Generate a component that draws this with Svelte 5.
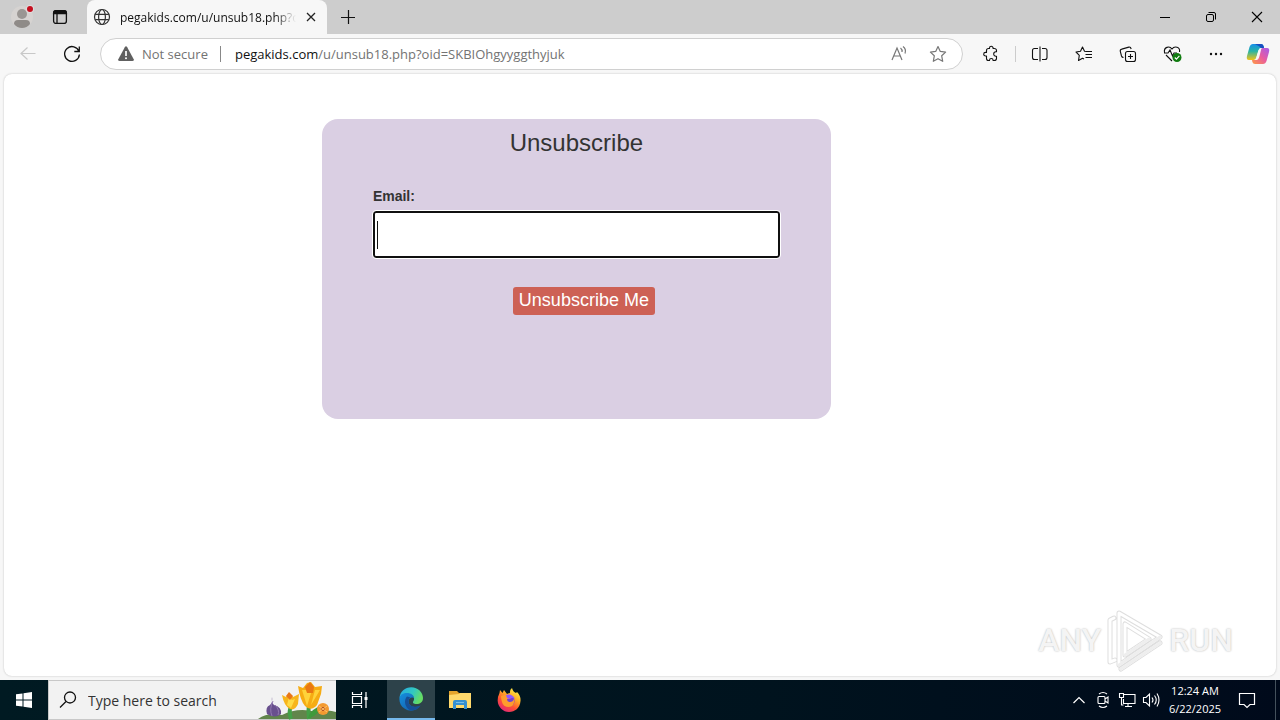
<script>
  let email = $state('');
  let query = $state('');
  const address = { host: 'pegakids.com', path: '/u/unsub18.php?oid=SKBIOhgyyggthyjuk' };
</script>

<div class="desktop">
  <header class="tabs">
    <div class="tab-tools">
      <button class="icon" aria-label="Profile">
        <svg width="24" height="24" viewBox="0 0 24 24"><circle cx="12" cy="12" r="11" fill="#d6d3d1"/><circle cx="12" cy="9" r="5" fill="#9a9693"/><path d="M4 19q0-4 4-4h8q4 0 4 4-3 4-8 4t-8-4z" fill="#8f8b88"/><circle cx="20" cy="4" r="4" fill="#dedcdb"/><circle cx="20" cy="4" r="3" fill="#c50f1f"/></svg>
      </button>
      <button class="icon" aria-label="Tab actions">
        <svg width="16" height="16" viewBox="0 0 16 16" fill="none" stroke="#111" stroke-width="1.3"><rect x="1.6" y="1.6" width="12.8" height="12.8" rx="2.5"/><path d="M1.6 4.5V4q0-2.4 2.4-2.4h8q2.4 0 2.4 2.4v.5z" fill="#111"/><path d="M5 5v9"/></svg>
      </button>
    </div>
    <div class="tab">
      <svg width="18" height="18" viewBox="0 0 18 18" fill="none" stroke="#333" stroke-width="1.2"><circle cx="9" cy="9" r="7.5"/><ellipse cx="9" cy="9" rx="3.4" ry="7.5"/><path d="M2.2 6.3h13.6M2.2 11.7h13.6"/></svg>
      <span class="tab-title">{address.host}{address.path}</span>
      <button class="icon" aria-label="Close tab"><svg width="12" height="12" viewBox="0 0 12 12" stroke="#222" stroke-width="1.3"><path d="M2 2l8 8M10 2l-8 8"/></svg></button>
    </div>
    <button class="icon new-tab" aria-label="New tab"><svg width="16" height="16" viewBox="0 0 16 16" stroke="#111" stroke-width="1.2"><path d="M8.500 1v14M1 8.500h14"/></svg></button>
    <div class="window-tools">
      <button class="icon" aria-label="Minimize"><svg width="12" height="12" viewBox="0 0 12 12" stroke="#000"><path d="M1 6.5h10"/></svg></button>
      <button class="icon" aria-label="Restore"><svg width="12" height="12" viewBox="0 0 12 12" fill="none" stroke="#000"><rect x="1.5" y="3.5" width="7" height="7" rx="1.5"/><path d="M3.5 1.5H9q1.5 0 1.5 1.5v5.500"/></svg></button>
      <button class="icon" aria-label="Close"><svg width="12" height="12" viewBox="0 0 12 12" stroke="#000" stroke-width="1.1"><path d="M1 1l10 10M11 1L1 11"/></svg></button>
    </div>
  </header>

  <nav class="toolbar">
    <div class="nav-tools">
      <button class="icon" aria-label="Back"><svg width="18" height="18" viewBox="0 0 18 18" fill="none" stroke="#c8c8c8" stroke-width="1.2"><path d="M16.500 8.500H2M8.500 2.500l-6.500 6 6.500 6"/></svg></button>
      <button class="icon" aria-label="Refresh"><svg width="20" height="20" viewBox="0 0 20 20" fill="none" stroke="#111" stroke-width="1.3"><path d="M17 7.500A7.400 7.400 0 1 0 17.400 10.500M17.300 2.500V7.500H12.300"/></svg></button>
    </div>
    <div class="address">
      <svg width="18" height="18" viewBox="0 0 18 18"><path d="M7.800 2.200q1.200-1.800 2.400 0l6.500 12q.8 1.800-1.200 1.800h-13q-2 0-1.200-1.800z" fill="#606060"/><path d="M9 6v5" stroke="#fff" stroke-width="1.700"/><circle cx="9" cy="13.200" r="1" fill="#fff"/></svg>
      <span class="insecure">Not secure</span>
      <span class="url"><b>{address.host}</b>{address.path}</span>
      <button class="icon" aria-label="Read aloud"><svg width="18" height="18" viewBox="0 0 18 18" fill="none" stroke="#777" stroke-width="1.2"><path d="M2 15L7 3l5 12M4 11h6.200M10.500 3q2 1.500 1.500 4M13 1.500q3.500 2.500 2 7"/></svg></button>
      <button class="icon" aria-label="Add to favorites"><svg width="18" height="18" viewBox="0 0 18 18" fill="none" stroke="#777" stroke-width="1.2" stroke-linejoin="round"><path d="M9 1.500l2.300 4.900 5.300.7-3.900 3.700 1 5.500L9 13.700l-4.700 2.600 1-5.500L1.400 7.100l5.300-.7z"/></svg></button>
    </div>
    <div class="actions">
      <button class="icon" aria-label="Extensions"><svg width="18" height="18" viewBox="0 0 18 18" fill="none" stroke="#111" stroke-width="1.1" stroke-linejoin="round"><path d="M4.500 5.500q0-2 2-2h1v-.4a1.800 1.800 0 0 1 3.600 0v.4h1q2.400 0 2.400 2v1.300h-.6a2.200 2.200 0 0 0 0 4.400h.6v2.300q0 2-2.400 2h-1v-.2a1.800 1.800 0 0 0-3.600 0v.2h-1q-2 0-2-2v-2.500h-1a1.800 1.800 0 0 1 0-3.600h1z"/></svg></button>
      <i class="rule"></i>
      <button class="icon" aria-label="Split screen"><svg width="18" height="18" viewBox="0 0 18 18" fill="none" stroke="#111" stroke-width="1.1"><path d="M7 3.500H3.500Q1.500 3.500 1.500 5.500v7q0 2 2 2H7M11 3.500h3q2 0 2 2v7q0 2-2 2h-3M9 1.500v15"/></svg></button>
      <button class="icon" aria-label="Favorites"><svg width="18" height="18" viewBox="0 0 18 18" fill="none" stroke="#111" stroke-width="1.1" stroke-linejoin="round"><path d="M11.500 6.500L9.500 6.200 7.500 2 5.500 6.200 1 7l3.300 3.300-.8 5.200 4-2.200 1.500.8M10.500 6.500H17M10.500 9.500H17M10.500 12.500H17"/></svg></button>
      <button class="icon" aria-label="Collections"><svg width="18" height="18" viewBox="0 0 18 18" fill="none" stroke="#111" stroke-width="1.1"><rect x="6.500" y="6.500" width="10" height="10" rx="2"/><path d="M11.500 9v5M9 11.500h5M4.500 12.500q-1.500 0-2-1.500L1.300 6.500q-.4-2 1.500-2.400l7-2Q11.600 1.700 12.200 4"/></svg></button>
      <button class="icon" aria-label="Browser essentials"><svg width="20" height="18" viewBox="0 0 20 18" fill="none" stroke="#111" stroke-width="1.1"><path d="M1.500 7.500C.5 2 6.500.5 9 4c2.500-3.500 8.500-2 7.500 3M3 10l6 6M1 8h4l2-3 2.500 6L11 8h3"/><circle cx="14" cy="12.500" r="4.500" fill="#107c10" stroke="none"/><path d="M11.800 12.500l1.600 1.600 3-3.200" stroke="#fff"/></svg></button>
      <button class="icon" aria-label="Settings and more"><svg width="18" height="18" viewBox="0 0 18 18" fill="#111"><circle cx="4" cy="9" r="1.200"/><circle cx="9" cy="9" r="1.200"/><circle cx="14" cy="9" r="1.200"/></svg></button>
      <button class="icon copilot" aria-label="Copilot">
        <svg width="24" height="22" viewBox="0 0 24 22">
          <defs>
            <linearGradient id="cp1" x1="0" y1="0" x2="0" y2="1"><stop stop-color="#168fe9"/><stop offset=".45" stop-color="#28b4a5"/><stop offset="1" stop-color="#f3c316"/></linearGradient>
            <linearGradient id="cp2" x1="1" y1="0" x2="0" y2="1"><stop stop-color="#a45ceb"/><stop offset=".5" stop-color="#e95c9f"/><stop offset="1" stop-color="#ff9b43"/></linearGradient>
          </defs>
          <path d="M7 1h8q2 0 2.600 2L18 5h-3q-2 0-2.700 2.500l-2 7Q9.700 17 7.500 17H3q-3 0-2-4L3.500 4Q4.500 1 7 1z" fill="url(#cp1)"/>
          <path d="M17 21H9q-2 0-2.600-2L6 17h3q2 0 2.700-2.500l2-7Q14.300 5 16.500 5H21q3 0 2 4l-2.500 9q-1 3-3.500 3z" fill="url(#cp2)"/>
          <path d="M9 1h6q2 0 2.600 2l.4 2h-2q-2 0-2.500-1.500z" fill="#174fc1"/>
          <path d="M10.800 13l2-6q.7-2 2.700-2l-2 8q-1 4-3 4H8q2 0 2.800-4z" fill="#f7f7f7"/>
        </svg>
      </button>
    </div>
  </nav>

  <main class="page">
    <form class="card" onsubmit={(event) => event.preventDefault()}>
      <h1>Unsubscribe</h1>
      <label for="email">Email:</label>
      <input id="email" class="email" type="text" bind:value={email} />
      <button class="submit">Unsubscribe Me</button>
    </form>
    <div class="watermark">
      <span>ANY</span>
      <svg width="60" height="64" viewBox="0 0 60 64" fill="none" stroke-linejoin="round" stroke-linecap="round">
        <g stroke="#dedede" stroke-width="5"><path d="M14 5L55 29 14 57zM20 16v31L44 31zM9 10L5 12v42l5-2M16 61l39-26"/></g>
        <g stroke="#fff" stroke-width="3"><path d="M14 5L55 29 14 57zM20 16v31L44 31zM9 10L5 12v42l5-2M16 61l39-26"/></g>
        <path d="M14 57l41-28M20 47l24-16M16 61l39-26" stroke="#eee" stroke-width="3"/>
      </svg>
      <span>RUN</span>
    </div>
  </main>

  <footer class="taskbar">
    <button class="task" aria-label="Start"><svg width="16" height="16" viewBox="0 0 16 16" fill="#fff"><path d="M0 2.300L6.500 1.400V7.500H0zM7.500 1.200L16 0v7.500H7.500zM0 8.500h6.500v6.100L0 13.700zM7.500 8.500H16V16l-8.500-1.200z"/></svg></button>
    <div class="search">
      <svg width="20" height="20" viewBox="0 0 20 20" fill="none" stroke="#111" stroke-width="1.300"><circle cx="12" cy="7.500" r="5.500"/><path d="M8 11.500L2 17.500"/></svg>
      <input type="text" aria-label="Search" placeholder="Type here to search" bind:value={query} />
      <svg width="78" height="38" viewBox="0 0 78 38">
        <path d="M0 38Q10 31 24 34 40 26 58 31 70 28 78 31V38z" fill="#61854b"/>
        <path d="M33 38Q30 29 34 24M51 38q-1-8 0-16" stroke="#43a047" stroke-width="4" fill="none"/>
        <path d="M50 37q3-10 14-12-3 8-12 12z" fill="#3f9a3c"/>
        <path d="M14 16q-1 5 2 8 8 2 7 9-6 5-14 0-2-7 3-9 3-3 2-8z" fill="#69508e"/><path d="M15 20q-4 8-1 15M17 24q5 5 3 10" stroke="#927ab0" fill="none"/>
        <path d="M24 14l4 2 3-4 4 4 6-3-1 10q-3 7-8 5-6-3-8-14z" fill="#f7b51c"/><path d="M31 16l-2 8 4 3 4-9-3 1z" fill="#ffdb45"/><path d="M28 15l3-4 4 4-3 4z" fill="#e97717"/>
        <path d="M40 5l5 2 4-5 4-1 4 5 7-1-1 8-4 11q-6 7-12 1Q42 19 40 5z" fill="#f6ac13"/><path d="M44 9l5 16 5-16M57 9l-4 15 9-15z" fill="#ffd33a"/><path d="M47 6l5-5 4 5-1 6h-6z" fill="#e97812"/>
        <circle cx="65" cy="28" r="6" fill="#f39a31"/><circle cx="65" cy="28" r="2" fill="#a94a20"/><path d="M61 25l8 6M69 25l-8 6" stroke="#ffbe67"/>
      </svg>
    </div>
    <button class="task view" aria-label="Task view"><svg width="18" height="18" viewBox="0 0 18 18" fill="none" stroke="#fff" stroke-width="1.200"><path d="M1.500 1v2.500h9V1M1.500 17v-2.500h9V17M1.500 5.500h9v7h-9zM15 1v16"/><path d="M13.500 6h3v3h-3z" fill="#fff" stroke="none"/></svg></button>
    <button class="task active" aria-label="Edge">
      <svg width="24" height="24" viewBox="0 0 24 24">
        <defs><linearGradient id="e1" x1="0" y1="0" x2="1" y2=".4"><stop stop-color="#25a9e7"/><stop offset=".6" stop-color="#32c8c0"/><stop offset="1" stop-color="#65dc65"/></linearGradient><linearGradient id="e2" x1="0" y1="0" x2="1" y2="1"><stop stop-color="#1590df"/><stop offset="1" stop-color="#1456a2"/></linearGradient></defs>
        <path d="M.5 11C1 4.500 6 .3 12.300.3 19 .3 24 5.500 24 11c0 4-3 6-6.500 6-3 0-4.300-1.300-3-3 2-3-1-6.500-5-6.500C5 7.500 1.500 9 .5 11z" fill="url(#e1)"/>
        <path d="M.4 12C.4 8 4 5.800 8 6c4 0 7 2.300 7 5-2-1.500-5.500 0-5.500 3.500 0 4 5 7.500 12 4-4 6-11 6.500-16 3C2 19.300.4 16 .4 12z" fill="url(#e2)"/>
        <path d="M8 9.500c-3 3-3 10 3 13.800 4 .8 8-1.500 10.500-4.800-7 3-12 0-12-4 0-2 1-3.500 2-4z" fill="#164f96"/>
      </svg>
    </button>
    <button class="task" aria-label="File Explorer"><svg width="24" height="22" viewBox="0 0 24 22"><path d="M1 2h8l2 2h11v15H1z" fill="#e5a52d"/><path d="M1 6l10-1 1-1h11v15H1z" fill="#ffd96c"/><path d="M5 20v-7q0-2 2-2h10q2 0 2 2v7h-3v-4H8v4z" fill="#358fd0"/><path d="M8 13h8v1H8z" fill="#74bdea"/></svg></button>
    <button class="task" aria-label="Firefox">
      <svg width="24" height="24" viewBox="0 0 24 24">
        <defs><linearGradient id="ff" x1=".8" y1="0" x2=".2" y2="1"><stop stop-color="#fff44f"/><stop offset=".35" stop-color="#ffad24"/><stop offset=".65" stop-color="#ff4f35"/><stop offset="1" stop-color="#df247f"/></linearGradient></defs>
        <path d="M2.500 5L3 2l2.500 3L7 2l3 4q2-1 3-1-.5-3 2-5 1 4 4 5l1-1q4 4 3.500 9C23 20 18 24 12 24S1 19 .7 13Q.5 9 2.500 5z" fill="url(#ff)"/>
        <circle cx="12" cy="13" r="5.500" fill="#7542cf"/><path d="M4 8q4-2 7 0l3 1q-1 2-4 2 0 3 3 3 3 0 4-3 1 7-5 8-6 0-7-5-1-3-1-6z" fill="#ff9d2c"/><path d="M9 7q6-2 9 4-3-2-5 0l-3-1z" fill="#9059ff"/>
      </svg>
    </button>
    <div class="tray">
      <svg width="16" height="18" viewBox="-1 0 16 18" fill="none" stroke="#fff" stroke-width="1.200"><path d="M1.500 12L7 6.500l5.500 5.500"/></svg>
      <svg width="16" height="18" viewBox="-1 0 16 18" fill="none" stroke="#fff" stroke-width="1.100"><rect x="2" y="5.500" width="7" height="7" rx="1"/><path d="M9 8l3-2v6l-3-2M3 3q4-3 8 0M3 15q4 3 8 0"/></svg>
      <svg width="16" height="18" viewBox="1 0 16 18" fill="none" stroke="#fff" stroke-width="1.100"><path d="M6 3.500h11v9H5.500V8M10 12.500v3M7 15.500h7M1.500 2.500h4v4h-4zM3.500 6.500V14h2"/></svg>
      <svg width="16" height="18" viewBox="1 0 16 18" fill="none" stroke="#fff" stroke-width="1.100"><path d="M1.500 6.500H4l3.500-3.500v12L4 11.500H1.500zM10 6.500q2 2.500 0 5M12.500 4.500q3.500 4.500 0 9M15 2.500q4 6.500 0 13"/></svg>
      <time class="clock"><span>12:24 AM</span><span>6/22/2025</span></time>
      <svg class="note" width="18" height="18" viewBox="0 0 18 18" fill="none" stroke="#fff" stroke-width="1.200"><path d="M1.500 2.500h15v11H12l-3 3-3-3H1.500z"/></svg>
      <i class="show-desktop"></i>
    </div>
  </footer>
</div>

<style>
  :global(body) { margin: 0; }
  .desktop { min-height: 100vh; display: flex; flex-direction: column; background: #f7f7f7; font-family: "Open Sans", "Noto Sans", sans-serif; font-size: 13px; color: #111; }
  .desktop * { box-sizing: border-box; }
  svg { display: block; flex: none; overflow: visible; }
  button { font: inherit; border: 0; padding: 0; background: none; color: inherit; }
  .icon { display: grid; place-items: center; flex: none; }
  .tabs { display: flex; align-items: stretch; height: 34px; background: linear-gradient(#cdcdcd 0 0) no-repeat, #f7f7f7; }
  .tab-tools { display: flex; width: 87px; gap: 18px; padding-left: 10px; align-items: center; }
  .tab { display: flex; align-items: center; width: 240px; gap: 9px; padding: 0 10px 0 6px; background: #f7f7f7; border-radius: 8px 8px 0 0; }
  .tab-title { flex: 1; min-width: 0; overflow: hidden; white-space: nowrap; font-size: 12px; mask-image: linear-gradient(to right, #000 88%, transparent); }
  .new-tab { padding: 0 13px; }
  .window-tools { display: flex; gap: 34px; margin-left: auto; padding-right: 17px; }
  .toolbar { display: flex; align-items: center; height: 40px; padding: 0 10px 0 19px; }
  .nav-tools { display: flex; align-items: center; gap: 25px; width: 81px; }
  .address { flex: 1; min-width: 0; display: flex; align-items: center; height: 32px; padding: 0 15px 0 16px; background: #fff; border: 1px solid #d0d0d0; border-radius: 16px; color: #737373; }
  .insecure { margin-left: 7px; padding-right: 12px; border-right: 1px solid #888; line-height: 16px; white-space: nowrap; }
  .url { flex: 1; min-width: 0; overflow: hidden; margin-left: 14px; white-space: nowrap; }
  .url b { font-weight: 400; color: #111; }
  .address .icon + .icon { margin-left: 21px; }
  .actions { display: flex; align-items: center; gap: 26px; padding-left: 19px; }
  .actions .icon { width: 18px; }
  .actions .rule { width: 1px; height: 16px; margin: 0 -11px; background: #ccc; }
  .actions .copilot { width: 24px; margin-left: -5px; }
  .page { position: relative; flex: 1; margin: 0 4px 4px; padding-top: 45px; background: #fff; border-radius: 8px; box-shadow: 0 0 2px #bbb; }
  .card { display: flex; flex-direction: column; width: 40%; min-height: 300px; margin-left: 25%; padding: 10px 4% 0; background: #dacfe3; border-radius: 16px; color: #333; font-family: "Liberation Sans", Arial, sans-serif; }
  h1 { margin: 0; text-align: center; font-size: 24px; line-height: 28px; font-weight: 400; }
  label { margin-top: 29px; font-size: 14px; line-height: 20px; font-weight: 700; }
  .email { width: 100%; height: 47px; margin-top: 5px; padding: 2px; font-size: 24px; border: 2px solid #101010; border-radius: 3px; outline: 1px solid #fff; background: linear-gradient(#111, #111) 2px center / 1px 28px no-repeat #fff; caret-color: transparent; }
  .submit { align-self: center; margin: 29px 0 0 15px; padding: 0 6px 2px; font-size: 18px; line-height: 26px; color: #fff; background: #cd6155; border-radius: 3px; }
  .watermark { position: absolute; right: 43px; bottom: 4px; display: flex; align-items: center; gap: 4px; font-family: Roboto, "Liberation Sans", sans-serif; font-size: 32px; font-weight: 500; color: #f4f4f4; text-shadow: 0 0 2px #b0b0b0; }
  .taskbar { display: flex; height: 40px; color: #fff; background: linear-gradient(to right, #001a22, #00131e 60%, #000a1b); }
  .task { display: grid; place-items: center; width: 48px; margin-right: 1px; }
  .task:first-child { margin: 0; }
  .view { margin-right: 3px; }
  .active { background: #2d424a; border-bottom: 2px solid #76b9ed; }
  .search { display: flex; align-items: center; width: 288px; padding-left: 9px; background: #f2f2f2; border: 1px solid #c8c8c8; border-right: 0; color: #333; }
  .search input { flex: 1; min-width: 0; margin-left: 10px; padding: 0; border: 0; outline: 0; background: none; font: 14px "Open Sans", sans-serif; color: #333; }
  .search input::placeholder { color: #333; opacity: 1; }
  .tray { display: flex; align-items: center; gap: 8px; margin-left: auto; padding-right: 4px; }
  .clock { display: flex; flex-direction: column; width: 56px; text-align: center; white-space: nowrap; font-size: 11px; line-height: 18px; }
  .note { margin-left: 7px; }
  .show-desktop { width: 1px; height: 40px; margin-left: 11px; background: #44515c; }
</style>
